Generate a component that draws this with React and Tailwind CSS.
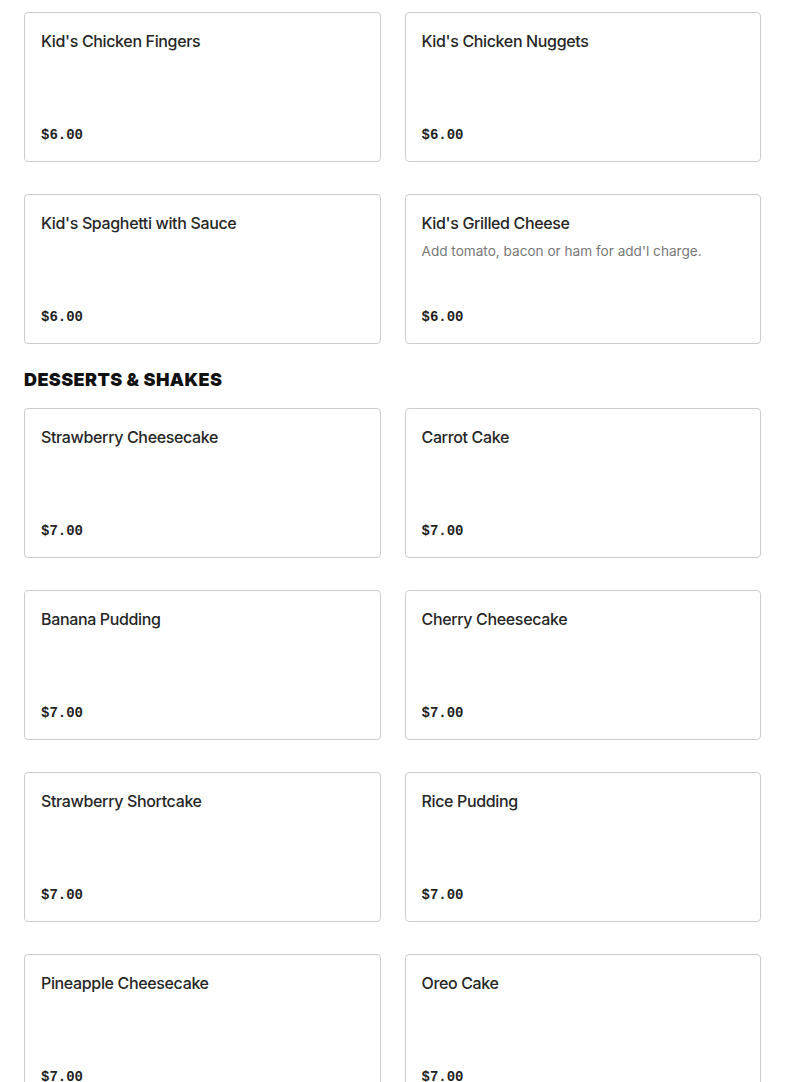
const kids = [
  { name: "Kid's Chicken Fingers", price: "$6.00" },
  { name: "Kid's Chicken Nuggets", price: "$6.00" },
  { name: "Kid's Spaghetti with Sauce", price: "$6.00" },
  {
    name: "Kid's Grilled Cheese",
    desc: "Add tomato, bacon or ham for add'l charge.",
    price: "$6.00",
  },
];

const desserts = [
  { name: "Strawberry Cheesecake", price: "$7.00" },
  { name: "Carrot Cake", price: "$7.00" },
  { name: "Banana Pudding", price: "$7.00" },
  { name: "Cherry Cheesecake", price: "$7.00" },
  { name: "Strawberry Shortcake", price: "$7.00" },
  { name: "Rice Pudding", price: "$7.00" },
  { name: "Pineapple Cheesecake", price: "$7.00" },
  { name: "Oreo Cake", price: "$7.00" },
];

function ItemCard({ item }) {
  return (
    <div className="flex h-[150px] flex-col justify-between rounded border border-[#cccccc] bg-white px-4 pt-4 pb-[14px]">
      <div>
        <h3 className="font-['Inter',sans-serif] text-base leading-6 font-medium tracking-[-0.35px] text-[#262626]">
          {item.name}
        </h3>
        {item.desc && (
          <p className="mt-1.5 font-['Inter',sans-serif] text-[13.6px] leading-5 text-[#777777]">
            {item.desc}
          </p>
        )}
      </div>
      <span className="font-['Liberation_Mono',monospace] text-sm leading-6 font-bold text-[#222222]">
        {item.price}
      </span>
    </div>
  );
}

export default function App() {
  return (
    <div className="min-h-screen bg-white px-6 pt-3">
      <div className="grid grid-cols-2 gap-x-6 gap-y-8">
        {kids.map((it) => (
          <ItemCard key={it.name} item={it} />
        ))}
      </div>

      <h2 className="mt-[22px] mb-[14px] font-['Inter',sans-serif] text-lg leading-7 font-black tracking-[0.4px] text-[#111111]">
        DESSERTS &amp; SHAKES
      </h2>

      <div className="grid grid-cols-2 gap-x-6 gap-y-8">
        {desserts.map((it) => (
          <ItemCard key={it.name} item={it} />
        ))}
      </div>
    </div>
  );
}
